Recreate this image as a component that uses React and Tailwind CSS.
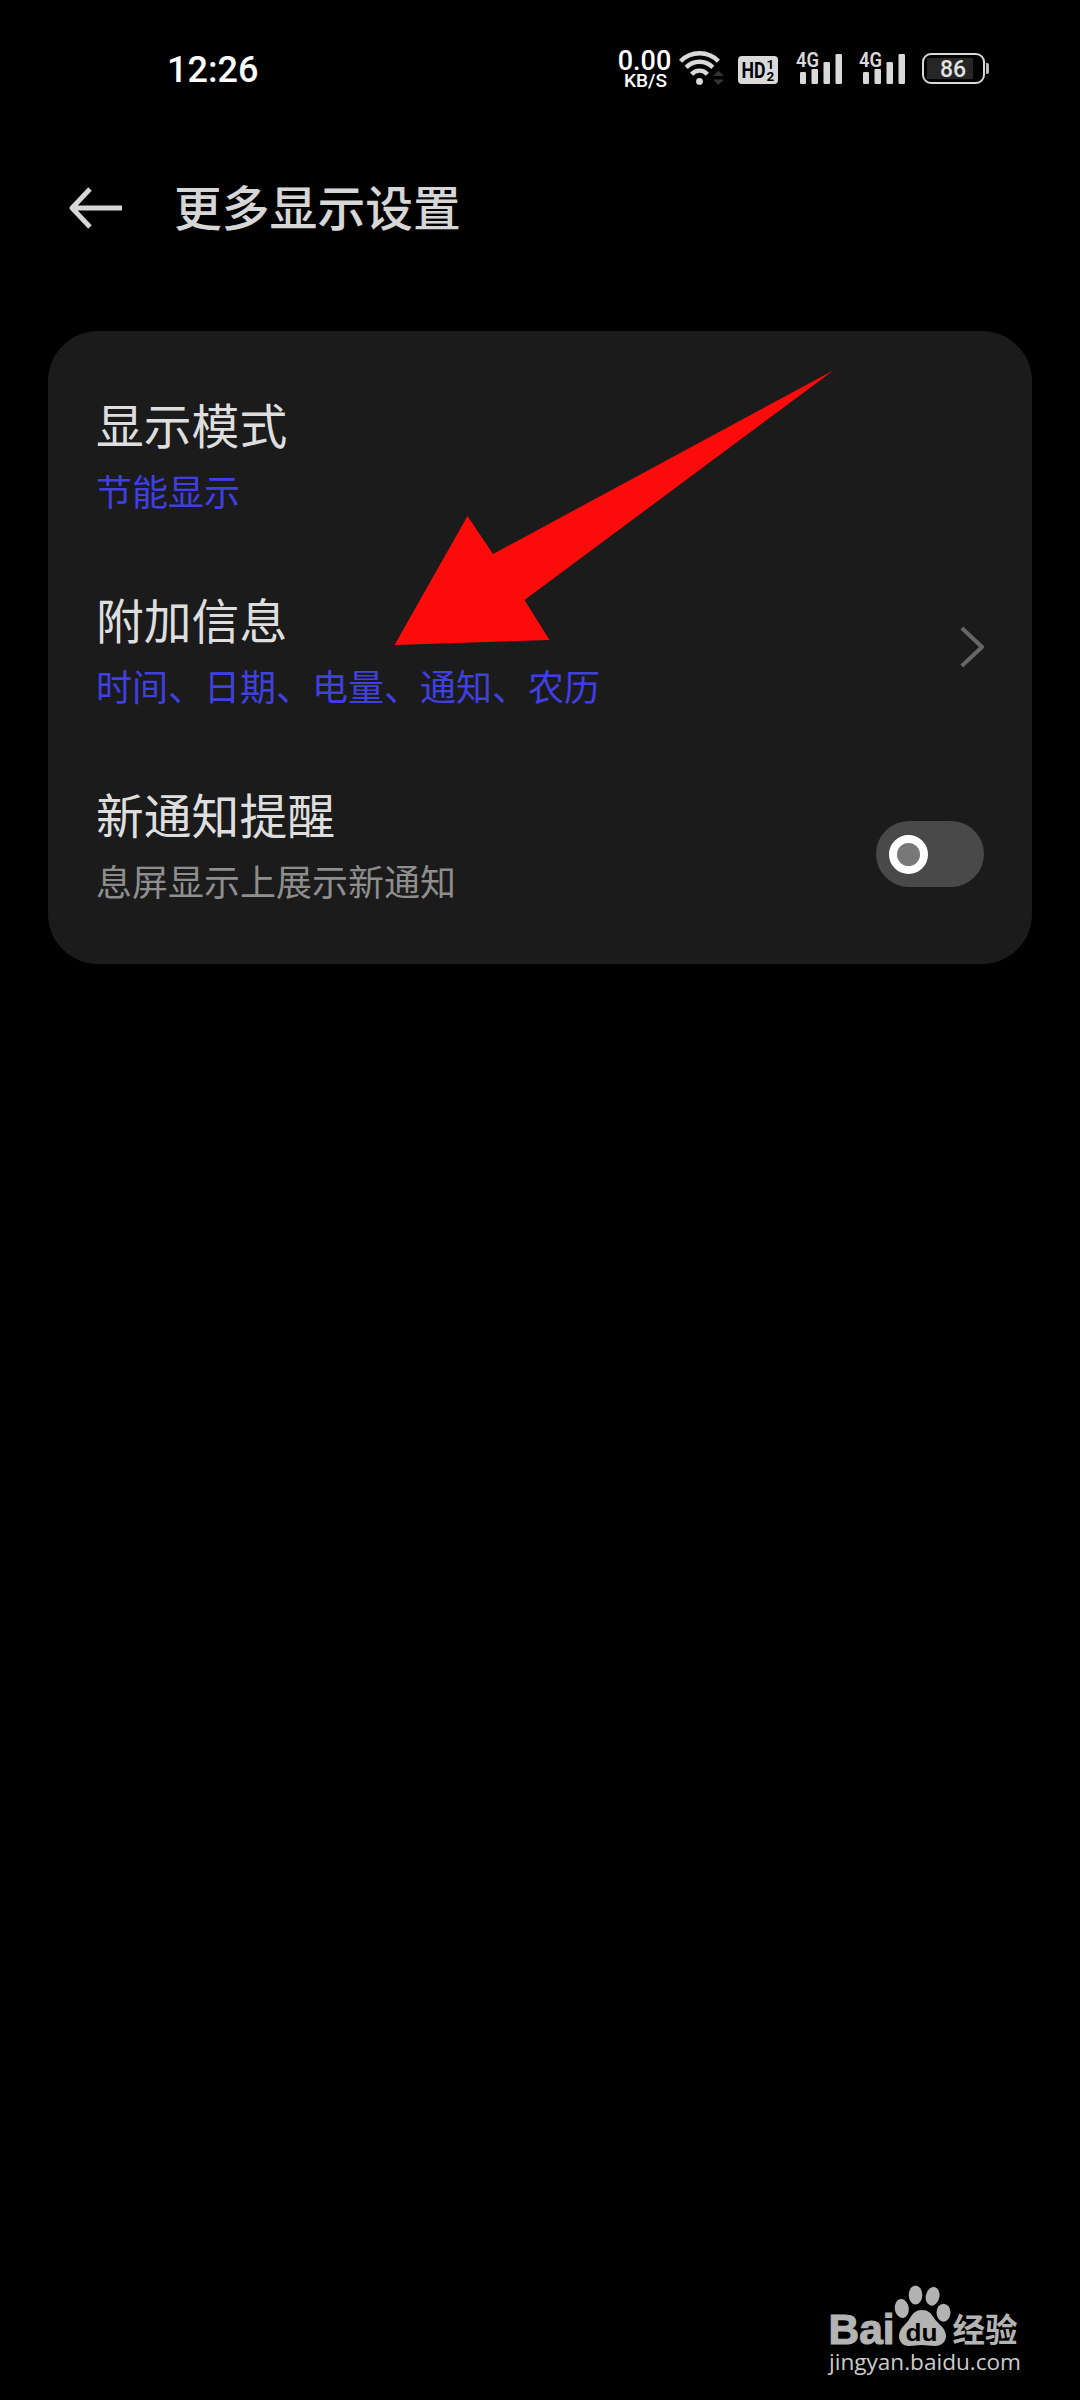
import React, { useState } from 'react';

const StatusSignal = ({ className }) => (
  <svg className={`overflow-visible ${className}`} width="48" height="36" viewBox="0 0 48 36" fill="#d9d9d9">
    <text x="0" y="16.8" fontSize="20.5" fontWeight="600" textLength="23" lengthAdjust="spacingAndGlyphs" className="font-['Roboto',sans-serif]">
      4G
    </text>
    <rect x="4" y="22" width="6" height="12" rx="1.2" />
    <rect x="15.5" y="19" width="6.5" height="15" rx="1.2" />
    <rect x="27.5" y="12" width="6.5" height="22" rx="1.2" />
    <rect x="39.5" y="4" width="6.5" height="30" rx="1.2" />
  </svg>
);

const WifiIcon = () => (
  <svg className="ml-1" width="48" height="36" viewBox="0 0 48 36" fill="none">
    <g stroke="#d9d9d9" strokeWidth="4.4">
      <path d="M2.6 11.2a26.5 26.5 0 0 1 37.8 0" />
      <path d="M8.2 17.4a18.6 18.6 0 0 1 26.6 0" />
      <path d="M13.6 24.2a10.6 10.6 0 0 1 15.8 0" />
    </g>
    <circle cx="21.5" cy="31.4" r="3.4" fill="#d9d9d9" />
    <path d="M35 26l5.5-5.5L46 26zM35 29.5l5.5 5.5 5.5-5.5z" fill="#333333" />
  </svg>
);

const HdIcon = () => (
  <svg className="ml-3" width="40" height="36" viewBox="0 0 40 36">
    <rect x="0" y="6" width="40" height="28" rx="4" fill="#d9d9d9" />
    <g fill="#000" className="font-['Roboto',sans-serif]" fontWeight="700">
      <text x="3.5" y="28" fontSize="22.5" textLength="24" lengthAdjust="spacingAndGlyphs">HD</text>
      <text x="28.5" y="19" fontSize="13.5">1</text>
      <text x="28.5" y="30.5" fontSize="13.5">2</text>
    </g>
  </svg>
);

const Battery = ({ level }) => (
  <div className="ml-[15px] mt-[3px] flex items-center">
    <div className="flex h-[31px] w-[63px] items-center rounded-[9px] border-[2.5px] border-[#d9d9d9] pl-[3px]">
      <div className="flex h-[21px] w-[46px] items-center justify-center bg-[#262626] pl-[6px] pt-px text-[23px] font-medium leading-none text-[#e2e2e2]">
        {level}
      </div>
    </div>
    <div className="ml-px h-[11px] w-[3px] rounded-r-[2px] bg-[#bdbdbd]" />
  </div>
);

const StatusBar = () => (
  <div className="flex h-[104px] items-start justify-between pl-[167px] pr-[91px] pt-[50px] font-['Roboto',sans-serif] text-white">
    <span className="mt-[2px] text-[36px] font-medium leading-[37px]">12:26</span>
    <div className="flex items-start">
      <div className="flex w-[59px] flex-col items-center pt-px font-medium">
        <span className="text-[27px] leading-[21px]">0.00</span>
        <span className="pl-[2px] text-[19px] leading-[17px]">KB/S</span>
      </div>
      <WifiIcon />
      <HdIcon />
      <StatusSignal className="ml-[18px]" />
      <StatusSignal className="ml-[15px]" />
      <Battery level={86} />
    </div>
  </div>
);

const SettingRow = ({ title, detail, detailColor, children }) => (
  <div className="flex h-[195px] items-center justify-between px-12">
    <div>
      <h2 className="text-[47.8px] leading-[64px] text-[#dedede]">{title}</h2>
      <p className={`mt-[10px] text-[36px] leading-[48px] ${detailColor}`}>{detail}</p>
    </div>
    {children}
  </div>
);

const Toggle = ({ checked, onChange }) => (
  <button
    type="button"
    role="switch"
    aria-checked={checked}
    onClick={() => onChange(!checked)}
    className={`mt-[23px] flex h-[66px] w-[108px] items-center rounded-full bg-[#494949] px-[13px] ${checked ? 'justify-end' : 'justify-start'}`}
  >
    <span className="h-[39px] w-[39px] rounded-full border-8 border-white bg-[#787878]" />
  </button>
);

const Watermark = () => (
  <svg className="mr-[50px] mb-[14px]" width="210" height="106" viewBox="820 2280 210 106" fill="#b3b3b3">
    <text x="828.5" y="2344" fontSize="42.5" fontWeight="700" stroke="#b3b3b3" strokeWidth="1.2" textLength="66" lengthAdjust="spacingAndGlyphs" className="font-['Liberation_Sans',sans-serif]">
      Bai
    </text>
    <ellipse cx="901.8" cy="2308.5" rx="7" ry="9.5" transform="rotate(-8 901.8 2308.5)" />
    <ellipse cx="915.5" cy="2295" rx="6.8" ry="9.5" />
    <ellipse cx="932.6" cy="2296.3" rx="6.8" ry="9.5" transform="rotate(12 932.6 2296.3)" />
    <ellipse cx="943.5" cy="2312.7" rx="7" ry="9" />
    <path d="M922 2310c6 0 9 3 12 8 4 6 12 10 12 18 0 6-5 10-11 10-5 0-8-1-13-1s-8 1-13 1c-6 0-10-4-10-10 0-8 8-12 11-18 3-5 6-8 12-8z" />
    <text x="905.5" y="2340.5" fontSize="23" fontWeight="700" fill="#000" textLength="32" lengthAdjust="spacingAndGlyphs" className="font-['Liberation_Sans',sans-serif]">
      du
    </text>
    <text x="952.5" y="2341.5" fontSize="32.5" fontWeight="700" className="font-['Noto_Sans_CJK_SC',sans-serif]">
      经验
    </text>
    <text x="829" y="2370" fontSize="22.5" fontWeight="500" fill="#cccccc" textLength="192" lengthAdjust="spacingAndGlyphs" className="font-['Open_Sans',sans-serif]">
      jingyan.baidu.com
    </text>
  </svg>
);

const App = () => {
  const [notify, setNotify] = useState(false);

  return (
    <div className="relative flex h-[2400px] w-[1080px] flex-col overflow-hidden bg-black font-['Noto_Sans_CJK_SC',sans-serif]">
      <StatusBar />

      <header className="flex h-[208px] items-center pl-[69px]">
        <svg width="54" height="42" viewBox="0 0 54 42" fill="none" stroke="#d6d6d6" strokeWidth="4.8" strokeLinejoin="round">
          <path d="M21 2L3 21l18 19M4 21h49" />
        </svg>
        <h1 className="mb-[4px] ml-[51px] text-[47.8px] font-medium leading-[64px] text-[#d6d6d6]">更多显示设置</h1>
      </header>

      <main className="mx-12 mt-[19px] h-[633px] rounded-[50px] bg-[#1b1b1b] pt-6">
        <SettingRow title="显示模式" detail="节能显示" detailColor="text-[#4040e0]" />
        <SettingRow title="附加信息" detail="时间、日期、电量、通知、农历" detailColor="text-[#4040e0]">
          <svg className="-mt-px" width="24" height="42" viewBox="0 0 24 42" fill="none" stroke="#666666" strokeWidth="4" strokeLinejoin="round">
            <path d="M1.8 2L22 21 1.8 40" />
          </svg>
        </SettingRow>
        <SettingRow title="新通知提醒" detail="息屏显示上展示新通知" detailColor="text-[#8e8e8e]">
          <Toggle checked={notify} onChange={setNotify} />
        </SettingRow>
      </main>

      {/* pointer drawn over the card */}
      <svg className="pointer-events-none absolute left-[390px] top-[365px]" width="450" height="285" viewBox="390 365 450 285">
        <polygon points="394.5,645 467.5,516 493,554 834,370 524.5,600 549.5,640" fill="#fc0b0b" />
      </svg>

      <div className="mt-auto flex justify-end">
        <Watermark />
      </div>
    </div>
  );
};

export default App;
